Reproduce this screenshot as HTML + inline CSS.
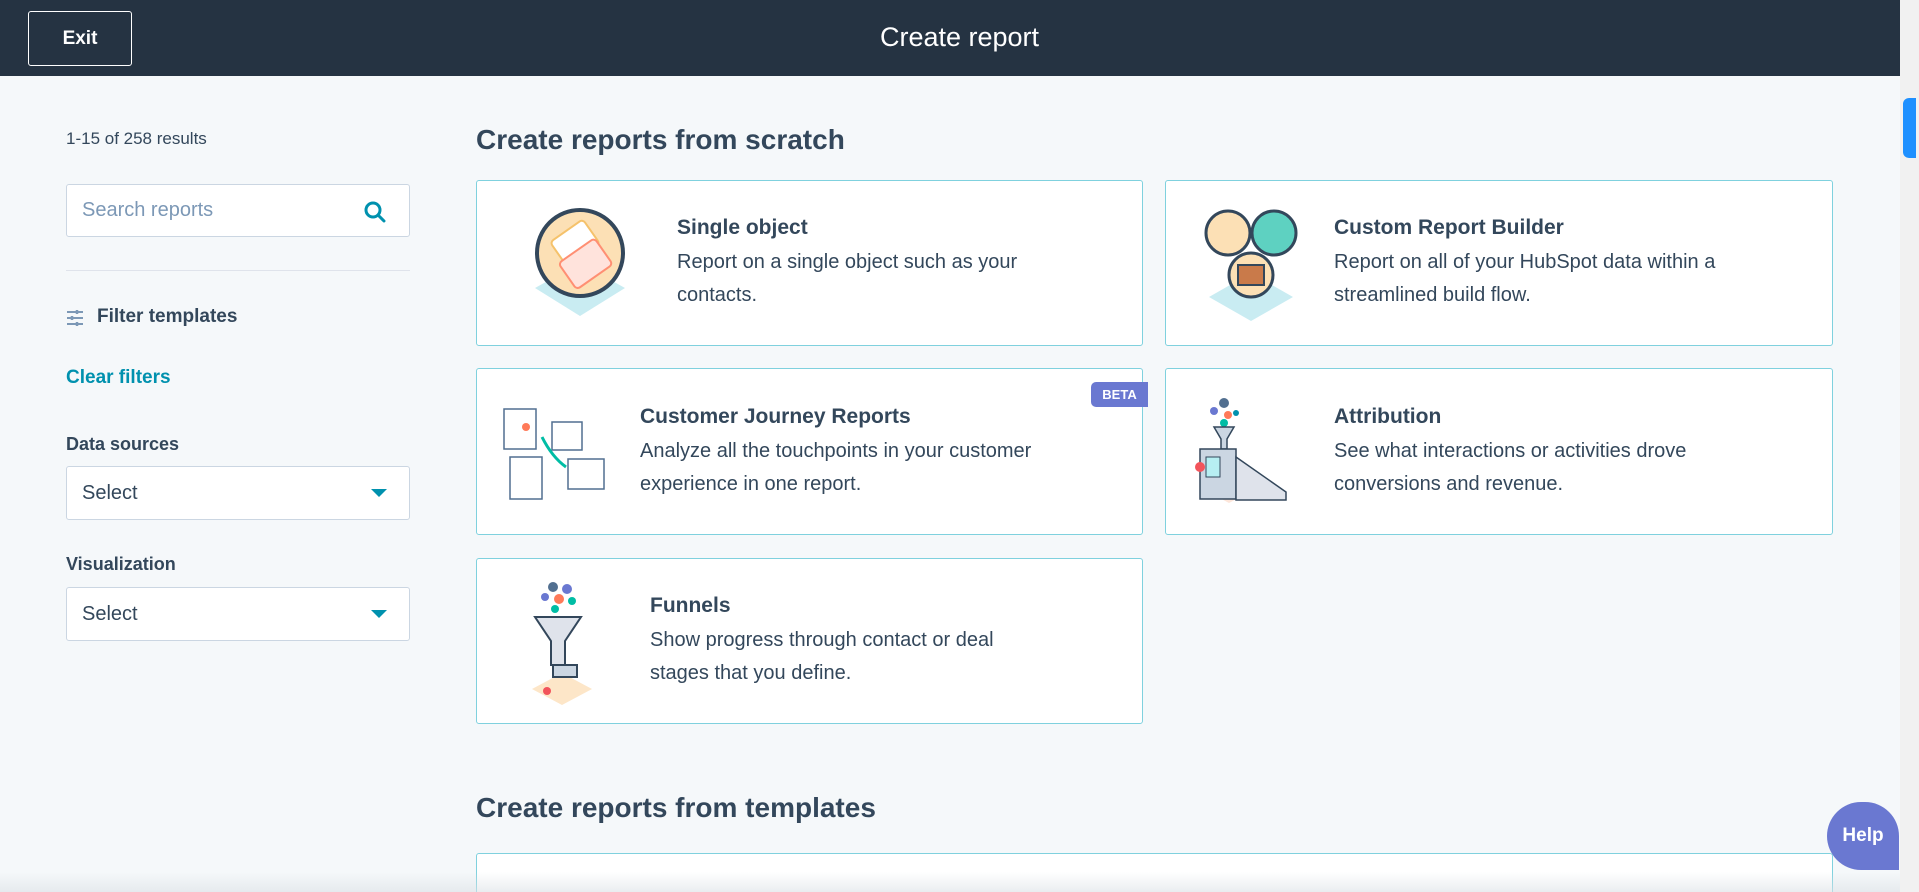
<!DOCTYPE html>
<html><head><meta charset="utf-8"><style>
*{box-sizing:border-box;margin:0;padding:0}
html,body{width:1919px;height:892px;overflow:hidden}
body{background:#f5f8fa;font-family:"Liberation Sans",sans-serif;color:#33475b}
#w{position:relative;width:1919px;height:892px;overflow:hidden}
.hdr{position:absolute;left:0;top:0;width:1919px;height:76px;background:#253342}
.exit{position:absolute;left:28px;top:11px;width:104px;height:55px;border:1px solid #fff;border-radius:3px;color:#fff;font-weight:bold;font-size:19px;text-align:center;line-height:53px}
.title{position:absolute;left:0;width:1919px;top:22px;text-align:center;color:#fff;font-size:27px}
.abs{position:absolute}
.box{position:absolute;background:#fff;border:1px solid #cbd6e2;border-radius:3px}
.card{position:absolute;background:#fff;border:1px solid #7fd1de;border-radius:3px}
.ct{position:absolute;font-weight:bold;font-size:21px;color:#33475b}
.cd{position:absolute;font-size:20px;line-height:33px;color:#33475b}
h2{position:absolute;font-size:28px;font-weight:bold;color:#33475b}
.sel{position:absolute;left:66px;width:344px;height:54px;background:#fff;border:1px solid #cbd6e2;border-radius:3px;font-size:20px;padding:15px 15px}
.sel:after{content:"";position:absolute;right:22px;top:22px;border-left:8px solid transparent;border-right:8px solid transparent;border-top:8px solid #0091ae}
.lbl{position:absolute;left:66px;font-size:18px;font-weight:bold}
</style></head><body><div id="w">
<div class="hdr"><div class="exit">Exit</div><div class="title">Create report</div></div>

<div class="abs" style="left:66px;top:129px;font-size:17px">1-15 of 258 results</div>
<div class="box" style="left:66px;top:184px;width:344px;height:53px"><span class="abs" style="left:15px;top:14px;font-size:20px;color:#7c98b6">Search reports</span>
<svg class="abs" style="left:296px;top:15px" width="24" height="24" viewBox="0 0 24 24"><circle cx="10" cy="10" r="7" fill="none" stroke="#0091ae" stroke-width="3"/><path d="M15 15l6 6" stroke="#0091ae" stroke-width="3" stroke-linecap="round"/></svg></div>
<div class="abs" style="left:66px;top:270px;width:344px;height:1px;background:#dfe3eb"></div>
<svg class="abs" style="left:66px;top:309px" width="18" height="18" viewBox="0 0 18 18" stroke="#7c98b6" stroke-width="2"><path d="M1 3h16M1 9h16M1 15h16"/><path d="M11 1v4M6 7v4M11 13v4" stroke-width="2.5"/></svg>
<div class="abs" style="left:97px;top:306px;font-size:19px;font-weight:bold">Filter templates</div>
<div class="abs" style="left:66px;top:367px;font-size:19px;font-weight:bold;color:#0091ae">Clear filters</div>
<div class="lbl" style="top:434px">Data sources</div>
<div class="sel" style="top:466px">Select</div>
<div class="lbl" style="top:554px">Visualization</div>
<div class="sel" style="top:587px">Select</div>

<h2 style="left:476px;top:124px">Create reports from scratch</h2>

<div class="card" style="left:476px;top:180px;width:667px;height:166px">
<svg class="abs" style="left:48px;top:22px" width="110" height="120" viewBox="0 0 110 120"><path d="M55 60l45 25-45 28-45-28z" fill="#c9ecf2"/><circle cx="55" cy="50" r="43" fill="#fce0b5" stroke="#33475b" stroke-width="4"/><rect x="30" y="25" width="40" height="30" rx="4" fill="#fff" stroke="#f5c26b" stroke-width="2" transform="rotate(-35 50 40)"/><rect x="38" y="45" width="44" height="32" rx="4" fill="#ffe3dc" stroke="#ff8f73" stroke-width="2" transform="rotate(-35 60 60)"/></svg>
<div class="ct" style="left:200px;top:35px">Single object</div>
<div class="cd" style="left:200px;top:65px">Report on a single object such as your<br>contacts.</div></div>

<div class="card" style="left:1165px;top:180px;width:668px;height:166px">
<svg class="abs" style="left:30px;top:22px" width="110" height="120" viewBox="0 0 110 120"><path d="M55 70l42 24-42 24-42-24z" fill="#c9ecf2"/><circle cx="32" cy="30" r="22" fill="#fce0b5" stroke="#33475b" stroke-width="3"/><circle cx="78" cy="30" r="22" fill="#5ed1c1" stroke="#33475b" stroke-width="3"/><circle cx="55" cy="72" r="22" fill="#fce0b5" stroke="#33475b" stroke-width="3"/><rect x="42" y="62" width="26" height="20" fill="#c97a4a" stroke="#33475b" stroke-width="2"/></svg>
<div class="ct" style="left:168px;top:35px">Custom Report Builder</div>
<div class="cd" style="left:168px;top:65px">Report on all of your HubSpot data within a<br>streamlined build flow.</div></div>

<div class="card" style="left:476px;top:368px;width:667px;height:167px">
<svg class="abs" style="left:25px;top:38px" width="110" height="100" viewBox="0 0 110 100" fill="#fff" stroke="#516f90" stroke-width="1.5"><rect x="2" y="2" width="32" height="40" transform="skew(0,-10)"/><rect x="50" y="15" width="30" height="28"/><rect x="8" y="50" width="32" height="42"/><rect x="66" y="52" width="36" height="30"/><path d="M40 30q10 20 24 30" stroke="#00bda5" stroke-width="3" fill="none"/><circle cx="24" cy="20" r="4" fill="#ff7a59" stroke="none"/></svg>
<div class="ct" style="left:163px;top:36px">Customer Journey Reports</div>
<div class="cd" style="left:163px;top:66px">Analyze all the touchpoints in your customer<br>experience in one report.</div>
<div class="abs" style="left:614px;top:13px;width:57px;height:25px;background:#6a78d1;border-radius:5px 0 0 5px;color:#fff;font-size:13px;font-weight:bold;text-align:center;line-height:25px">BETA</div></div>

<div class="card" style="left:1165px;top:368px;width:668px;height:167px">
<svg class="abs" style="left:28px;top:28px" width="100" height="110" viewBox="0 0 100 110"><path d="M5 90l30-18 30 18-30 16z" fill="#fde6da"/><circle cx="30" cy="6" r="5" fill="#516f90"/><circle cx="20" cy="14" r="4" fill="#6a78d1"/><circle cx="34" cy="18" r="4" fill="#ff7a59"/><circle cx="42" cy="16" r="3" fill="#0091ae"/><circle cx="30" cy="26" r="4" fill="#00bda5"/><path d="M20 30h20l-7 12v10h-6V42z" fill="#cbd6e2" stroke="#33475b" stroke-width="1.5"/><rect x="6" y="52" width="36" height="50" fill="#cbd6e2" stroke="#33475b" stroke-width="1.5"/><rect x="12" y="60" width="14" height="20" fill="#b7eff2" stroke="#33475b"/><circle cx="6" cy="70" r="5" fill="#f2545b"/><path d="M42 60l50 35v8H42z" fill="#dfe3eb" stroke="#33475b" stroke-width="1.5"/></svg>
<div class="ct" style="left:168px;top:36px">Attribution</div>
<div class="cd" style="left:168px;top:66px">See what interactions or activities drove<br>conversions and revenue.</div></div>

<div class="card" style="left:476px;top:558px;width:667px;height:166px">
<svg class="abs" style="left:50px;top:20px" width="80" height="130" viewBox="0 0 80 130"><path d="M5 110l30-16 30 16-30 16z" fill="#fde6c8"/><circle cx="26" cy="8" r="5" fill="#516f90"/><circle cx="40" cy="10" r="5" fill="#6a78d1"/><circle cx="18" cy="18" r="4" fill="#6a78d1"/><circle cx="32" cy="20" r="5" fill="#ff7a59"/><circle cx="45" cy="22" r="4" fill="#00bda5"/><circle cx="28" cy="30" r="4" fill="#00bda5"/><path d="M8 38h46l-16 24v24h-14V62z" fill="#dfe3eb" stroke="#33475b" stroke-width="2"/><rect x="26" y="86" width="24" height="12" fill="#cbd6e2" stroke="#33475b" stroke-width="2"/><circle cx="20" cy="112" r="4" fill="#f2545b"/></svg>
<div class="ct" style="left:173px;top:35px">Funnels</div>
<div class="cd" style="left:173px;top:65px">Show progress through contact or deal<br>stages that you define.</div></div>

<h2 style="left:476px;top:792px">Create reports from templates</h2>
<div class="card" style="left:476px;top:853px;width:1357px;height:60px"></div>
<div class="abs" style="left:0;top:872px;width:1900px;height:20px;background:linear-gradient(rgba(245,248,250,0),rgba(220,225,230,.6))"></div>

<div class="abs" style="left:1827px;top:802px;width:72px;height:68px;background:#6a78d1;border-radius:34px 34px 0 34px;color:#fff;font-weight:bold;font-size:19px;text-align:center;line-height:68px">Help</div>
<div class="abs" style="left:1900px;top:0;width:19px;height:892px;background:#f1f1f1"></div>
<div class="abs" style="left:1903px;top:98px;width:13px;height:60px;background:#1e90ff;border-radius:6px 0 0 6px"></div>
</div></body></html>
